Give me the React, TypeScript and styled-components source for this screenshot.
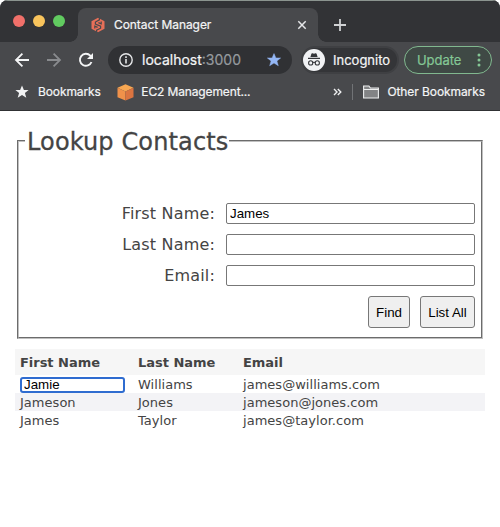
import React from 'react';
import styled, { createGlobalStyle } from 'styled-components';

const Global = createGlobalStyle`
  * { box-sizing: border-box; }
  html, body { margin: 0; background: #fff; }
  body { overflow: hidden; }
`;

const Window = styled.div`
  width: 500px;
  height: 527px;
  background: #fff;
  font-family: 'DejaVu Sans', sans-serif;
  color: #444;
`;

const Chrome = styled.header`
  height: 111px;
  background: #48494c;
  border-bottom: 1px solid #303134;
  font-family: Inter, sans-serif;
  color: #f4f5f6;
  border-radius: 8px 8px 0 0;
  overflow: hidden;
`;

const TabStrip = styled.div`
  height: 42px;
  background: #323336;
  border-top: 1px solid #8b948f;
  display: flex;
  align-items: flex-end;
`;

const Lights = styled.div`
  display: flex;
  gap: 8px;
  width: 78px;
  height: 41px;
  padding: 14px 0 0 13px;
`;

const Light = styled.i<{ $color: string }>`
  width: 12px;
  height: 12px;
  border-radius: 50%;
  background: ${(p) => p.$color};
`;

const Tab = styled.div`
  position: relative;
  width: 240px;
  height: 34px;
  background: #48494c;
  border-radius: 8px 8px 0 0;
  display: flex;
  align-items: center;
  padding: 0 11px 0 13px;

  &::before, &::after {
    content: '';
    position: absolute;
    bottom: 0;
    width: 8px;
    height: 8px;
  }
  &::before {
    left: -8px;
    background: radial-gradient(circle at 0 0, #323336 7.5px, #48494c 8px);
  }
  &::after {
    right: -8px;
    background: radial-gradient(circle at 100% 0, #323336 7.5px, #48494c 8px);
  }
`;

const Label = styled.span<{ $size: number; $spacing?: number; $color?: string; $ml?: number }>`
  font-size: ${(p) => p.$size}px;
  letter-spacing: ${(p) => p.$spacing ?? 0}px;
  color: ${(p) => p.$color ?? 'inherit'};
  margin-left: ${(p) => p.$ml ?? 0}px;
  line-height: 18px;
  white-space: nowrap;
  -webkit-text-stroke: 0.2px currentColor;
`;

const Icon = styled.svg<{ $ml?: number | 'auto' }>`
  display: block;
  flex: none;
  fill: none;
  margin-left: ${(p) => (p.$ml === 'auto' ? 'auto' : `${p.$ml ?? 0}px`)};
`;

const Toolbar = styled.div`
  height: 36px;
  display: flex;
  align-items: center;
  padding-left: 14px;
`;

const Address = styled.div`
  width: 184px;
  height: 28px;
  margin-left: 14px;
  border-radius: 14px;
  background: #303134;
  display: flex;
  align-items: center;
  padding: 0 11px;
`;

const Incognito = styled.div`
  width: 98px;
  height: 28px;
  margin-left: 9px;
  border-radius: 14px;
  background: #343538;
  border: 2px solid #3f4043;
  display: flex;
  align-items: center;
`;

const Update = styled.button`
  width: 88px;
  height: 28px;
  margin-left: 5px;
  padding: 0 10px 0 12px;
  border-radius: 14px;
  border: 1px solid #81b88f;
  background: #3f4945;
  color: #84c795;
  font-family: inherit;
  display: flex;
  align-items: center;
`;

const BookmarksBar = styled.div`
  height: 32px;
  display: flex;
  align-items: center;
  padding: 0 15px 4px;
`;

const Divider = styled.i`
  width: 1px;
  height: 16px;
  margin-left: 10px;
  background: #717376;
`;

const Page = styled.main`
  padding: 16px 15px 0;
`;

const Lookup = styled.fieldset`
  margin: 0 2px;
  height: 212px;
  padding: 0 6px;
  border: 2px groove #c0c0c0;
`;

const Legend = styled.legend`
  height: 28px;
  padding: 1px 1px 0 2px;
  font-size: 24px;
  line-height: 29px;
  letter-spacing: 0.13px;
  -webkit-text-stroke: 0.3px #444;
  white-space: nowrap;
`;

const Fields = styled.form`
  padding-top: 48px;
  display: grid;
  row-gap: 10px;
`;

const FieldRow = styled.label`
  display: grid;
  grid-template-columns: 188px 249px;
  column-gap: 11px;
  height: 21px;
  justify-content: end;
  align-items: center;
  text-align: right;
  font-size: 16px;
  line-height: 21px;
  letter-spacing: 0.17px;
`;

const TextInput = styled.input`
  width: 249px;
  height: 21px;
  border: 1px solid #777;
  border-radius: 2px;
  background: #fff;
  color: #000;
  outline: none;
  padding: 0 3px;
  font: 13.33px 'Liberation Sans', Arial, sans-serif;
`;

const Actions = styled.div`
  display: flex;
  justify-content: flex-end;
  gap: 10px;
`;

const Button = styled.button<{ $width: number }>`
  width: ${(p) => p.$width}px;
  height: 32px;
  padding: 0;
  border: 1px solid #777;
  border-radius: 3px;
  background: #efefef;
  color: #000;
  font: 13.33px 'Liberation Sans', Arial, sans-serif;
`;

const Table = styled.div`
  margin-top: 10px;
`;

const Row = styled.div<{ $head?: boolean; $striped?: boolean }>`
  display: grid;
  grid-template-columns: 118px 105px 1fr;
  align-items: center;
  height: ${(p) => (p.$head ? 26 : 18)}px;
  padding-left: 5px;
  background: ${(p) => (p.$head ? '#f6f6f6' : p.$striped ? '#f3f3f6' : '#fff')};
  font-size: 13px;
  font-weight: ${(p) => (p.$head ? 700 : 400)};
  letter-spacing: ${(p) => (p.$head ? -0.03 : 0.03)}px;
`;

const Cell = styled.span`
  height: 18px;
  padding-top: 1px;
  line-height: 18px;
  white-space: nowrap;
`;

const CellInput = styled.input`
  width: 105px;
  height: 16px;
  margin-top: 2px;
  padding: 0 2px 2px;
  border: 2px solid #2f6cd0;
  border-radius: 3px;
  outline: none;
  background: #fff;
  color: #000;
  font: 13.33px/12px 'Liberation Sans', Arial, sans-serif;
`;

const STAR = 'M7 0.6 8.9 5h4.7L9.9 8l1.4 4.7L7 10l-4.3 2.7L4.1 8 .4 5h4.7Z';

const contacts = [
  ['Jamie', 'Williams', 'james@williams.com'],
  ['Jameson', 'Jones', 'jameson@jones.com'],
  ['James', 'Taylor', 'james@taylor.com'],
];

const fields = [
  ['First Name:', 'James'],
  ['Last Name:', ''],
  ['Email:', ''],
];

function BrowserChrome() {
  return (
    <Chrome>
      <TabStrip>
        <Lights>
          <Light $color="#f1706a" />
          <Light $color="#f9c45c" />
          <Light $color="#61cb60" />
        </Lights>
        <Tab>
          <Icon width="14" height="16" viewBox="0 0 14 16">
            <path fill="#e76f58" d="M7 .8 13.5 4.2v7.6L7 15.2.5 11.8V4.2Z" />
            <path stroke="#48494c" strokeWidth="1.2" d="M8.4 0v2.8L4.4 5v2l5.2 2.2v2L5.6 13.2V16M10.2 4.6v2.2L7.4 5.6M3.8 11.4V9.2l2.8 1.2" />
          </Icon>
          <Label $size={12} $ml={9} $spacing={-0.06}>Contact Manager</Label>
          <Icon $ml="auto" width="10" height="10" viewBox="0 0 10 10">
            <path stroke="#e6e7e9" strokeWidth="1.5" d="m1.3 1.3 7.4 7.4m0-7.4L1.3 8.7" />
          </Icon>
        </Tab>
        <Icon $ml={15} width="14" height="34" viewBox="0 0 14 34">
          <path stroke="#d0d2d4" strokeWidth="1.8" d="M7 11v12M1 17h12" />
        </Icon>
      </TabStrip>
      <Toolbar>
        <Icon width="16" height="16" viewBox="0 0 16 16">
          <path stroke="#f4f5f6" strokeWidth="1.8" d="M15 8H2m6.4-6.4L2 8l6.4 6.4" />
        </Icon>
        <Icon $ml={16} width="16" height="16" viewBox="0 0 16 16">
          <path stroke="#898b8e" strokeWidth="1.8" d="M1 8h13M7.6 1.6 14 8l-6.4 6.4" />
        </Icon>
        <Icon $ml={16} width="16" height="16" viewBox="0 0 16 16">
          <path stroke="#f4f5f6" strokeWidth="1.9" d="M13.5 10A6 6 0 1 1 12.3 3.7L14 5.4" />
          <path fill="#f4f5f6" d="M15 1v6H9Z" />
        </Icon>
        <Address>
          <Icon width="14" height="14" viewBox="0 0 14 14">
            <circle cx="7" cy="7" r="6.2" stroke="#e5e6e8" strokeWidth="1.4" />
            <path stroke="#e5e6e8" strokeWidth="1.6" d="M7 6v4.5M7 3.3v1.6" />
          </Icon>
          <Label $size={14} $ml={9}>localhost</Label>
          <Label $size={14} $color="#969a9e">:3000</Label>
          <Icon $ml="auto" width="14" height="14" viewBox="0 0 14 14">
            <path fill="#94b7f5" stroke="#94b7f5" strokeWidth="0.5" d={STAR} />
          </Icon>
        </Address>
        <Incognito>
          <Icon width="22" height="22" viewBox="0 0 22 22">
            <circle cx="11" cy="11" r="11" fill="#f1f2f4" />
            <path fill="#34363a" d="m7.4 8 1-3.2q.3-.8 1.1-.5l1.5.4 1.5-.4q.8-.3 1.1.5l1 3.2ZM5 8.8h12V10H5Z" />
            <g stroke="#34363a" strokeWidth="1.1">
              <circle cx="7.7" cy="13.9" r="2.1" />
              <circle cx="14.3" cy="13.9" r="2.1" />
              <path d="M9.8 13.5q1.2-.6 2.4 0" />
            </g>
          </Icon>
          <Label $size={13} $ml={8}>Incognito</Label>
        </Incognito>
        <Update>
          <Label $size={13} $spacing={-0.05}>Update</Label>
          <Icon $ml="auto" width="4" height="14" viewBox="0 0 4 14">
            <g fill="#84c795">
              <circle cx="2" cy="2" r="1.5" />
              <circle cx="2" cy="7" r="1.5" />
              <circle cx="2" cy="12" r="1.5" />
            </g>
          </Icon>
        </Update>
      </Toolbar>
      <BookmarksBar>
        <Icon width="14" height="14" viewBox="0 0 14 14">
          <path fill="#f1f2f3" d={STAR} />
        </Icon>
        <Label $size={12} $ml={9} $spacing={-0.1}>Bookmarks</Label>
        <Icon $ml={16} width="17" height="17" viewBox="0 0 17 17">
          <path fill="#f7a752" d="m8.5 .2 8 3.6-8 3.7-8-3.7Z" />
          <path fill="#f0914a" d="M.5 3.8l8 3.7v9l-8-3.3Z" />
          <path fill="#db7440" d="M16.5 3.8l-8 3.7v9l8-3.3Z" />
        </Icon>
        <Label $size={12} $ml={7.5} $spacing={-0.13}>EC2 Management...</Label>
        <Icon $ml="auto" width="9" height="8" viewBox="0 0 9 8">
          <path stroke="#eeeff0" strokeWidth="1.4" d="m1 1 3 3-3 3m3.8-6 3 3-3 3" />
        </Icon>
        <Divider />
        <Icon $ml={10} width="16" height="14" viewBox="0 0 16 14">
          <path fill="#828385" stroke="#eeeff0" strokeWidth="1.1" d="M.6 1h5.3l1.5 2h8v10H.6Z" />
          <path stroke="#eeeff0" d="M1 4.5h14" />
        </Icon>
        <Label $size={12} $ml={8} $spacing={-0.08}>Other Bookmarks</Label>
      </BookmarksBar>
    </Chrome>
  );
}

export default function App() {
  return (
    <Window>
      <Global />
      <BrowserChrome />
      <Page>
        <Lookup>
          <Legend>Lookup Contacts</Legend>
          <Fields>
            {fields.map(([name, value]) => (
              <FieldRow key={name}>
                <span>{name}</span>
                <TextInput defaultValue={value} />
              </FieldRow>
            ))}
            <Actions>
              <Button type="button" $width={42}>Find</Button>
              <Button type="button" $width={55}>List All</Button>
            </Actions>
          </Fields>
        </Lookup>
        <Table>
          <Row $head>
            <Cell>First Name</Cell>
            <Cell>Last Name</Cell>
            <Cell>Email</Cell>
          </Row>
          {contacts.map(([first, last, email], i) => (
            <Row key={email} $striped={i === 1}>
              {i === 0 ? <CellInput defaultValue={first} /> : <Cell>{first}</Cell>}
              <Cell>{last}</Cell>
              <Cell>{email}</Cell>
            </Row>
          ))}
        </Table>
      </Page>
    </Window>
  );
}
